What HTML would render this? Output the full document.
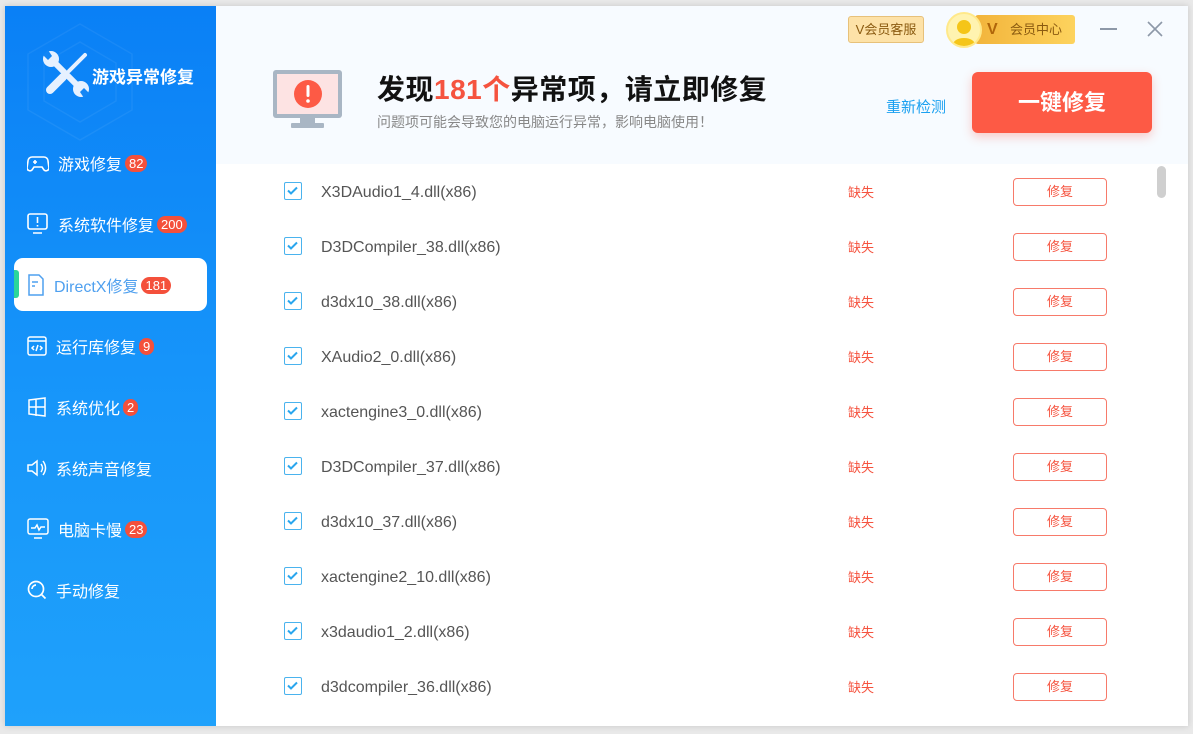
<!DOCTYPE html>
<html><head><meta charset="utf-8"><style>
*{margin:0;padding:0;box-sizing:border-box}
body{width:1193px;height:734px;background:#e9e9e9;font-family:"Liberation Sans","Noto Sans CJK SC",sans-serif;position:relative;overflow:hidden}
.win{position:absolute;left:5px;top:6px;width:1183px;height:720px;background:#fff;box-shadow:0 0 6px rgba(0,0,0,.15)}
.side{position:absolute;left:0;top:0;width:211px;height:720px;background:linear-gradient(180deg,#0a80f6 0%,#1796fa 55%,#1fa1fb 100%);overflow:hidden}
.logo{position:absolute;left:36px;top:43px}
.logot{position:absolute;left:87px;top:57px;color:#fff;font-size:17px;font-weight:bold}
.nav{position:absolute;left:22px;color:#fff;font-size:16px;display:flex;align-items:center;height:24px}
.nav svg{margin-right:9px}
.b{background:#f4503b;color:#fff;font-size:13px;border-radius:9px;padding:0 4px;height:17px;line-height:17px;margin-left:3px}
.act{position:absolute;left:9px;top:252px;width:193px;height:53px;background:#fff;border-radius:9px}
.act i{position:absolute;left:0;top:12px;width:5px;height:28px;background:#2bd69a;border-radius:0 3px 3px 0}
.head{position:absolute;left:211px;top:0;width:972px;height:158px;background:#f7fbff}
.title{position:absolute;left:377px;top:68px;font-size:28px;font-weight:bold;color:#111;letter-spacing:.5px}
.title span{color:#f5533f}
.sub{position:absolute;left:377px;top:112px;font-size:14px;color:#888}
.re{position:absolute;left:886px;top:96px;font-size:15px;color:#1aa0f0}
.fix{position:absolute;left:972px;top:72px;width:180px;height:61px;background:#fd5a45;border-radius:6px;color:#fff;font-size:22px;font-weight:bold;text-align:center;line-height:61px;box-shadow:0 4px 10px rgba(253,90,69,.3)}
.vkf{position:absolute;left:848px;top:16px;width:76px;height:27px;background:#fde2a8;border:1px solid #e7c17a;border-radius:3px;font-size:13px;color:#8a5a10;text-align:center;line-height:25px}
.hy{position:absolute;left:975px;top:15px;width:100px;height:29px;background:linear-gradient(90deg,#f2b43b,#fdd35e);border-radius:3px;font-size:13px;color:#8a5a10;line-height:29px;padding-left:35px}
.hy b{position:absolute;left:12px;color:#b0660a;font-size:16px}
.av{position:absolute;left:946px;top:12px;width:36px;height:36px;border-radius:50%;background:#fff3b0;border:2px solid #ffe98a;overflow:hidden}
.row{position:absolute;left:0;width:1193px;height:30px}
.cb{position:absolute;left:284px;top:5px;width:18px;height:18px;border:1.5px solid #4ab3ee;border-radius:2px}
.nm{position:absolute;left:321px;top:7px;font-size:16px;color:#555}
.qs{position:absolute;left:848px;top:5px;font-size:13px;color:#f5533f}
.bt{position:absolute;left:1013px;top:1px;width:94px;height:28px;border:1.5px solid #f77a6a;border-radius:4px;color:#f5533f;font-size:13px;text-align:center;line-height:25px}
.sc{position:absolute;left:1157px;top:166px;width:9px;height:32px;border-radius:5px;background:#cfcfcf}
</style></head><body>
<div class="win">
<div class="side">
<svg style="position:absolute;left:10px;top:10px" width="130" height="130" viewBox="0 0 130 130" fill="none" stroke="rgba(255,255,255,.06)" stroke-width="1.5"><path d="M65 8l52 30v56l-52 30-52-30V38z"/><path d="M65 26l36 21v38l-36 21-36-21V47z"/></svg>
<svg class="logo" width="50" height="50" viewBox="0 0 50 50">
<g stroke="#e6f1ff" stroke-linecap="round" fill="none">
<path d="M12 12 L38 38" stroke-width="6"/>
<path d="M28 22 L44 6" stroke-width="4"/>
<path d="M22 28 L9 41" stroke-width="8"/>
</g>
<g fill="#e6f1ff"><circle cx="10" cy="10" r="8"/><circle cx="40" cy="40" r="8"/></g>
<g fill="#1386f6"><path d="M2 6 L7 1 L11 7 L7 11 Z"/><path d="M48 44 L43 49 L39 43 L43 39 Z"/></g>
</svg>
<div class="logot">游戏异常修复</div>
<div class="nav" style="top:145px"><svg width="22" height="20" viewBox="0 0 22 20" fill="none" stroke="#fff" stroke-width="1.6"><path d="M5 4h12a4 4 0 014 4l1 7a3 3 0 01-5 2l-2-3H7l-2 3a3 3 0 01-5-2l1-7a4 4 0 014-4z"/><path d="M6 9h4M8 7v4"/></svg>游戏修复<span class="b">82</span></div>
<div class="nav" style="top:206px"><svg width="22" height="22" viewBox="0 0 22 22" fill="none" stroke="#fff" stroke-width="1.6"><rect x="1" y="1" width="19" height="15" rx="2"/><path d="M10.5 4v6M10.5 12v1.5M6 20h9"/></svg>系统软件修复<span class="b">200</span></div>
<div class="act"><i></i></div>
<div class="nav" style="top:267px;color:#4fa0ef"><svg width="18" height="22" viewBox="0 0 18 22" fill="none" stroke="#4fa0ef" stroke-width="1.5"><path d="M2 1h10l4 4v16H2z"/><path d="M5 8h6M5 12h3"/></svg>DirectX修复<span class="b">181</span></div>
<div class="nav" style="top:328px"><svg width="20" height="20" viewBox="0 0 20 20" fill="none" stroke="#fff" stroke-width="1.5"><rect x="1" y="1" width="18" height="18" rx="2"/><path d="M1 5h18M7 10l-2 2 2 2M13 10l2 2-2 2M11 9l-2 6"/></svg>运行库修复<span class="b">9</span></div>
<div class="nav" style="top:389px"><svg width="20" height="20" viewBox="0 0 20 20" fill="none" stroke="#fff" stroke-width="1.5"><path d="M2 3l16-2v18l-16-2zM2 10h16M9 2v17"/></svg>系统优化<span class="b">2</span></div>
<div class="nav" style="top:450px"><svg width="20" height="20" viewBox="0 0 20 20" fill="none" stroke="#fff" stroke-width="1.5"><path d="M1 7h4l5-4v14l-5-4H1z"/><path d="M14 6q3 4 0 8M16 3q5 7 0 14"/></svg>系统声音修复</div>
<div class="nav" style="top:511px"><svg width="22" height="22" viewBox="0 0 22 22" fill="none" stroke="#fff" stroke-width="1.5"><rect x="1" y="1" width="20" height="15" rx="2"/><path d="M4 10h4l2-3 2 5 2-3h4M7 20h8"/></svg>电脑卡慢<span class="b">23</span></div>
<div class="nav" style="top:572px"><svg width="20" height="20" viewBox="0 0 20 20" fill="none" stroke="#fff" stroke-width="1.7"><circle cx="9" cy="9" r="7.5"/><path d="M14.5 14.5l4 4M5 9a4 4 0 014-4"/></svg>手动修复</div>
</div>
<div class="head"></div>
</div>
<div class="vkf">V会员客服</div>
<div class="hy"><b>V</b>会员中心</div>
<div class="av"><svg width="36" height="36" viewBox="0 0 36 36"><circle cx="16" cy="13" r="7" fill="#f5c518"/><path d="M3 36q1-12 13-12t13 12z" fill="#f5c518"/></svg></div>
<div style="position:absolute;left:1100px;top:28px;width:17px;height:2px;background:#8d98a8"></div>
<svg style="position:absolute;left:1147px;top:21px" width="16" height="16" viewBox="0 0 16 16" stroke="#8d98a8" stroke-width="1.6"><path d="M1 1l14 14M15 1L1 15"/></svg>
<svg style="position:absolute;left:272px;top:69px" width="71" height="60" viewBox="0 0 71 60"><rect x="1" y="1" width="69" height="48" rx="3" fill="#a9b6c4"/><rect x="5" y="5" width="61" height="40" fill="#fde3e3"/><rect x="28" y="49" width="15" height="6" fill="#a9b6c4"/><rect x="19" y="54" width="33" height="5" rx="1" fill="#a9b6c4"/><circle cx="36" cy="25" r="14" fill="#fd5a45"/><rect x="34.5" y="16" width="3" height="12" rx="1.5" fill="#fff"/><circle cx="36" cy="32" r="1.8" fill="#fff"/></svg>
<div class="title">发现<span>181个</span>异常项，请立即修复</div>
<div class="sub">问题项可能会导致您的电脑运行异常，影响电脑使用！</div>
<div class="re">重新检测</div>
<div class="fix">一键修复</div>
<div class="sc"></div>

<div class="row" style="top:177px"><div class="cb"><svg width="15" height="15" viewBox="0 0 15 15"><path d="M3 7.5l3 3 6-6" fill="none" stroke="#2aa6ee" stroke-width="2"/></svg></div><div class="nm">X3DAudio1_4.dll(x86)</div><div class="qs">缺失</div><div class="bt">修复</div></div>
<div class="row" style="top:232px"><div class="cb"><svg width="15" height="15" viewBox="0 0 15 15"><path d="M3 7.5l3 3 6-6" fill="none" stroke="#2aa6ee" stroke-width="2"/></svg></div><div class="nm">D3DCompiler_38.dll(x86)</div><div class="qs">缺失</div><div class="bt">修复</div></div>
<div class="row" style="top:287px"><div class="cb"><svg width="15" height="15" viewBox="0 0 15 15"><path d="M3 7.5l3 3 6-6" fill="none" stroke="#2aa6ee" stroke-width="2"/></svg></div><div class="nm">d3dx10_38.dll(x86)</div><div class="qs">缺失</div><div class="bt">修复</div></div>
<div class="row" style="top:342px"><div class="cb"><svg width="15" height="15" viewBox="0 0 15 15"><path d="M3 7.5l3 3 6-6" fill="none" stroke="#2aa6ee" stroke-width="2"/></svg></div><div class="nm">XAudio2_0.dll(x86)</div><div class="qs">缺失</div><div class="bt">修复</div></div>
<div class="row" style="top:397px"><div class="cb"><svg width="15" height="15" viewBox="0 0 15 15"><path d="M3 7.5l3 3 6-6" fill="none" stroke="#2aa6ee" stroke-width="2"/></svg></div><div class="nm">xactengine3_0.dll(x86)</div><div class="qs">缺失</div><div class="bt">修复</div></div>
<div class="row" style="top:452px"><div class="cb"><svg width="15" height="15" viewBox="0 0 15 15"><path d="M3 7.5l3 3 6-6" fill="none" stroke="#2aa6ee" stroke-width="2"/></svg></div><div class="nm">D3DCompiler_37.dll(x86)</div><div class="qs">缺失</div><div class="bt">修复</div></div>
<div class="row" style="top:507px"><div class="cb"><svg width="15" height="15" viewBox="0 0 15 15"><path d="M3 7.5l3 3 6-6" fill="none" stroke="#2aa6ee" stroke-width="2"/></svg></div><div class="nm">d3dx10_37.dll(x86)</div><div class="qs">缺失</div><div class="bt">修复</div></div>
<div class="row" style="top:562px"><div class="cb"><svg width="15" height="15" viewBox="0 0 15 15"><path d="M3 7.5l3 3 6-6" fill="none" stroke="#2aa6ee" stroke-width="2"/></svg></div><div class="nm">xactengine2_10.dll(x86)</div><div class="qs">缺失</div><div class="bt">修复</div></div>
<div class="row" style="top:617px"><div class="cb"><svg width="15" height="15" viewBox="0 0 15 15"><path d="M3 7.5l3 3 6-6" fill="none" stroke="#2aa6ee" stroke-width="2"/></svg></div><div class="nm">x3daudio1_2.dll(x86)</div><div class="qs">缺失</div><div class="bt">修复</div></div>
<div class="row" style="top:672px"><div class="cb"><svg width="15" height="15" viewBox="0 0 15 15"><path d="M3 7.5l3 3 6-6" fill="none" stroke="#2aa6ee" stroke-width="2"/></svg></div><div class="nm">d3dcompiler_36.dll(x86)</div><div class="qs">缺失</div><div class="bt">修复</div></div>
</body></html>
